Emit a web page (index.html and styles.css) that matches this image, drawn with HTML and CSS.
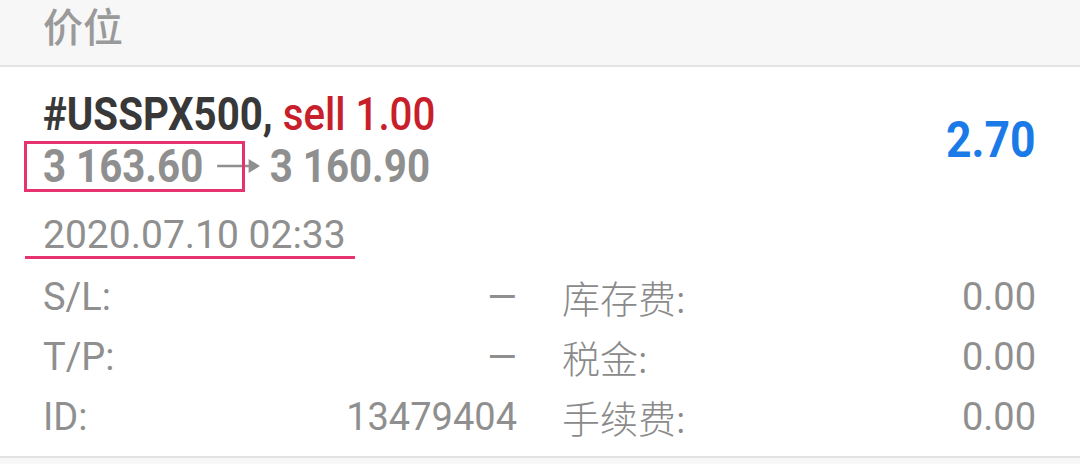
FILE: index.html
```html
<!DOCTYPE html>
<html lang="zh">
<head>
<meta charset="utf-8">
<link rel="stylesheet" href="styles.css">
</head>
<body>
<div class="header">价位</div>
<div class="card">
  <div class="top">
    <div class="title">
      <div class="line line1"><span class="sym">#USSPX500,</span> <span class="sell">sell 1.00</span></div>
      <div class="line line2"><span>3 163.60</span><svg class="arrow" width="52" height="20" viewBox="0 0 52 20"><line x1="2" y1="10" x2="42" y2="10" stroke="#8f8f8f" stroke-width="2.4"/><polygon points="38,3 51,10 38,17" fill="#8f8f8f"/></svg><span>3 160.90</span></div>
    </div>
    <div class="profit">2.70</div>
  </div>
  <div class="date">2020.07.10 02:33</div>
  <div class="rows">
    <div class="cell"><span>S/L:</span><span>—</span></div>
    <div class="cell"><span class="cjk">库存费:</span><span>0.00</span></div>
    <div class="cell"><span>T/P:</span><span>—</span></div>
    <div class="cell"><span class="cjk">税金:</span><span>0.00</span></div>
    <div class="cell"><span>ID:</span><span>13479404</span></div>
    <div class="cell"><span class="cjk">手续费:</span><span>0.00</span></div>
  </div>
  <div class="mark-box"></div>
  <div class="mark-line"></div>
</div>
</body>
</html>
```
FILE: styles.css
```css
html, body {
  margin: 0;
  padding: 0;
  background: #f7f7f7;
  width: 1080px;
  height: 464px;
  overflow: hidden;
  font-family: Roboto, "Noto Sans CJK SC", sans-serif;
}
.header {
  height: 64px;
  padding: 1px 0 0 43px;
  font-family: "Noto Sans CJK SC", sans-serif;
  font-size: 40px;
  line-height: 48px;
  font-weight: 500;
  color: #9a9a9a;
  border-bottom: 2px solid #e4e4e4;
}
.card {
  position: relative;
  background: #fff;
  padding: 21px 44px 9px 43px;
  border-bottom: 2px solid #e2e2e2;
}
.top {
  display: flex;
  justify-content: space-between;
  align-items: center;
}
.line {
  width: max-content;
  font-weight: 700;
  font-size: 46px;
  line-height: 52px;
  transform: scaleX(0.875);
  transform-origin: 0 50%;
  white-space: nowrap;
}
.sym { color: #383838; }
.sell { color: #c8202a; font-weight: 500; }
.line2 {
  color: #8f8f8f;
  display: flex;
  align-items: center;
}
.arrow {
  margin: 0 10px 0 14px;
}
.profit {
  font-weight: 700;
  font-size: 50px;
  line-height: 52px;
  color: #1a7ae8;
  transform: scaleX(0.89);
  transform-origin: 100% 50%;
}
.date {
  margin-top: 19px;
  font-size: 39px;
  line-height: 48px;
  color: #8f8f8f;
}
.rows {
  margin-top: 8px;
  display: grid;
  grid-template-columns: 1fr 1fr;
  column-gap: 45px;
  font-size: 38px;
  line-height: 60px;
  color: #8f8f8f;
}
.cell {
  display: flex;
  justify-content: space-between;
}
.cjk {
  font-family: "Noto Sans CJK SC", sans-serif;
  font-weight: 300;
  color: #8a8a8a;
}
.mark-box {
  position: absolute;
  left: 24px;
  top: 74px;
  width: 221px;
  height: 51px;
  box-sizing: border-box;
  border: 3px solid #e6336e;
}
.mark-line {
  position: absolute;
  left: 25px;
  top: 189px;
  width: 330px;
  height: 3px;
  background: #e6336e;
}
```
